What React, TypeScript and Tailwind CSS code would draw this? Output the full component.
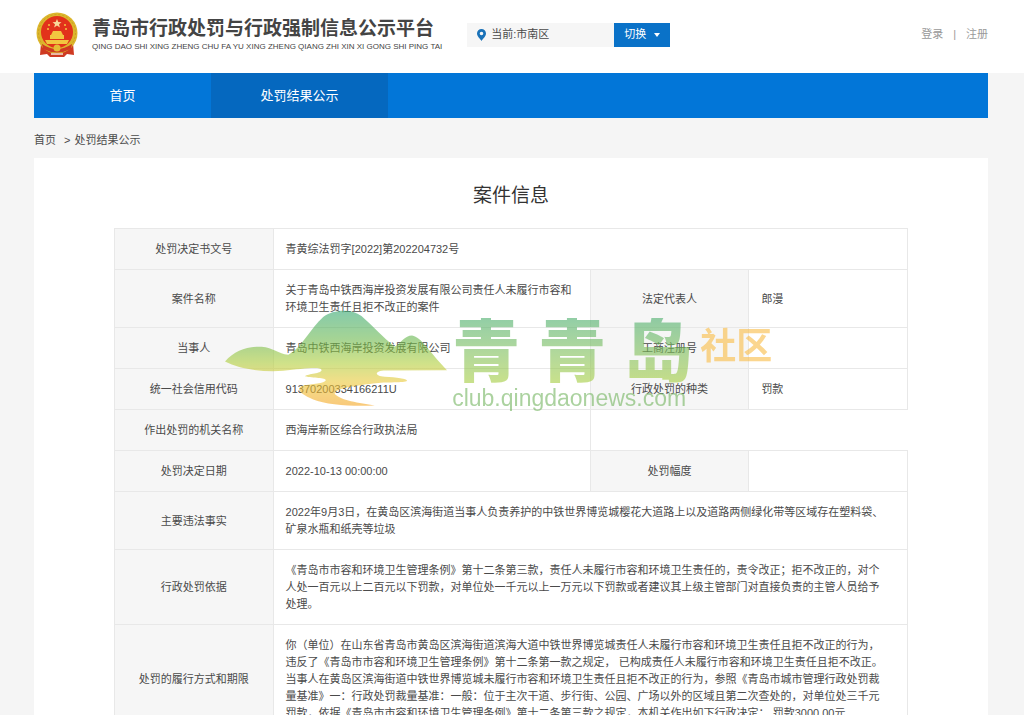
import React from 'react';

interface CaseField {
    label: string;
    lines: string[];
}

interface CaseRow {
    fields: CaseField[];
    // the row ends after its only value, the remaining columns stay empty
    short?: boolean;
}

const caseRows: CaseRow[] = [
    { fields: [{ label: '处罚决定书文号', lines: ['青黄综法罚字[2022]第202204732号'] }] },
    {
        fields: [
            { label: '案件名称', lines: ['关于青岛中铁西海岸投资发展有限公司责任人未履行市容和', '环境卫生责任且拒不改正的案件'] },
            { label: '法定代表人', lines: ['郎漫'] },
        ],
    },
    {
        fields: [
            { label: '当事人', lines: ['青岛中铁西海岸投资发展有限公司'] },
            { label: '工商注册号', lines: [''] },
        ],
    },
    {
        fields: [
            { label: '统一社会信用代码', lines: ['91370200334166211U'] },
            { label: '行政处罚的种类', lines: ['罚款'] },
        ],
    },
    { fields: [{ label: '作出处罚的机关名称', lines: ['西海岸新区综合行政执法局'] }], short: true },
    {
        fields: [
            { label: '处罚决定日期', lines: ['2022-10-13 00:00:00'] },
            { label: '处罚幅度', lines: [''] },
        ],
    },
    {
        fields: [
            {
                label: '主要违法事实',
                lines: [
                    '2022年9月3日，在黄岛区滨海街道当事人负责养护的中铁世界博览城樱花大道路上以及道路两侧绿化带等区域存在塑料袋、',
                    '矿泉水瓶和纸壳等垃圾',
                ],
            },
        ],
    },
    {
        fields: [
            {
                label: '行政处罚依据',
                lines: [
                    '《青岛市市容和环境卫生管理条例》第十二条第三款，责任人未履行市容和环境卫生责任的，责令改正；拒不改正的，对个',
                    '人处一百元以上二百元以下罚款，对单位处一千元以上一万元以下罚款或者建议其上级主管部门对直接负责的主管人员给予',
                    '处理。',
                ],
            },
        ],
    },
    {
        fields: [
            {
                label: '处罚的履行方式和期限',
                lines: [
                    '你（单位）在山东省青岛市黄岛区滨海街道滨海大道中铁世界博览城责任人未履行市容和环境卫生责任且拒不改正的行为，',
                    '违反了《青岛市市容和环境卫生管理条例》第十二条第一款之规定， 已构成责任人未履行市容和环境卫生责任且拒不改正。',
                    '当事人在黄岛区滨海街道中铁世界博览城未履行市容和环境卫生责任且拒不改正的行为，参照《青岛市城市管理行政处罚裁',
                    '量基准》一：行政处罚裁量基准：一般：位于主次干道、步行街、公园、广场以外的区域且第二次查处的，对单位处三千元',
                    '罚款，依据《青岛市市容和环境卫生管理条例》第十二条第三款之规定，本机关作出如下行政决定： 罚款3000.00元',
                ],
            },
        ],
    },
];

const Emblem: React.FC = () => (
    <svg width="42" height="46" viewBox="0 0 42 46" aria-hidden="true">
        <path d="M5 31 L4 43 L11 42 L14 45 L28 45 L31 42 L38 43 L37 31 Z" fill="#cf3a22" />
        <circle cx="21" cy="21" r="20.500" fill="#dcb62c" />
        <circle cx="21" cy="21" r="18.500" fill="none" stroke="#c79f25" strokeWidth="1" strokeDasharray="2 2" />
        <circle cx="21" cy="20" r="16" fill="#e2321b" />
        <path d="M21 7 l1.300 3 3.200 .2 -2.500 2 .9 3.200 -2.900 -1.800 -2.900 1.800 .9 -3.200 -2.500 -2 3.200 -.2z" fill="#f8d99a" />
        <g fill="#f2c640">
            <circle cx="13" cy="13" r="1" />
            <circle cx="29" cy="13" r="1" />
            <circle cx="12" cy="17" r="1" />
            <circle cx="30" cy="17" r="1" />
            <path d="M15 23 L17 19 H25 L27 23 Z" />
            <path d="M14 23 H28 V27 H14 Z" />
            <path d="M9 28 H33 L31 32 H11 Z" />
        </g>
        <path d="M6 32 Q21 42 36 32 L35 37 Q21 44 7 37 Z" fill="#cf3a22" />
        <circle cx="21" cy="36" r="3.500" fill="#e5bb35" />
        <path d="M15 41 H27 V43 H15 Z" fill="#e9b9a6" />
    </svg>
);

const PinIcon: React.FC = () => (
    <svg width="9" height="12" viewBox="0 0 9 12" aria-hidden="true">
        <path
            d="M4.500 0 A4.500 4.500 0 0 0 0 4.500 C0 7.500 3 9.500 4.500 12 C6 9.500 9 7.500 9 4.500 A4.500 4.500 0 0 0 4.500 0 Z M4.500 2.700 A1.800 1.800 0 1 1 4.500 6.300 A1.800 1.800 0 1 1 4.500 2.700 Z"
            fill="#1b72b8"
            fillRule="evenodd"
        />
    </svg>
);

const Watermark: React.FC = () => (
    <div className="pointer-events-none absolute top-[82px] left-[14%] flex items-start opacity-60">
        <svg width="222" height="97" viewBox="15 28 667 290" aria-hidden="true">
            <defs>
                <linearGradient id="hills" x1="0" y1="0" x2="0" y2="1">
                    <stop offset="0" stopColor="#35a873" />
                    <stop offset="0.300" stopColor="#6bb84e" />
                    <stop offset="0.550" stopColor="#b0cf3c" />
                    <stop offset="0.750" stopColor="#ecc93a" />
                    <stop offset="1" stopColor="#f6a623" />
                </linearGradient>
            </defs>
            <path
                d="M15 182 C45 150 80 136 125 138 C160 140 175 160 205 162 C245 140 270 85 310 48 C340 25 395 22 425 45 C460 75 490 110 525 138 C545 125 555 104 577 104 C605 108 630 155 682 208 L500 209 C465 208 460 225 495 228 C530 230 562 234 562 240 C555 247 500 243 460 248 C410 255 340 262 345 280 C360 298 420 308 465 314 C400 318 320 312 280 296 C240 280 225 262 250 254 C275 249 315 248 318 238 C318 230 280 232 255 226 C265 218 305 218 305 208 C303 196 250 204 190 210 C130 215 60 205 15 182 Z"
                fill="url(#hills)"
            />
        </svg>
        <div className="ml-[5px] pt-2">
            <div className="flex w-[240px] justify-between bg-linear-to-b from-[#4aae6c] to-[#a9cf3a] bg-clip-text text-[68px] leading-[68px] font-black text-transparent">
                <span>青</span>
                <span>青</span>
                <span>岛</span>
            </div>
            <div className="text-[23px] leading-6 text-[#74b560]">club.qingdaonews.com</div>
        </div>
        <div className="ml-2 pt-4 text-[36px] leading-[42px] font-bold text-[#fabc45]">社区</div>
    </div>
);

const ValueLines: React.FC<{ lines: string[] }> = ({ lines }) => (
    <>
        {lines.map((line, index) => (
            <div key={index} className="whitespace-nowrap">{line}</div>
        ))}
    </>
);

const App: React.FC = () => {
    const getSpan = (row: CaseRow) => (row.fields.length === 1 && !row.short ? 3 : 1);

    return (
        <div className="min-h-screen bg-[#f5f5f5] font-['Liberation_Sans','Noto_Sans_CJK_SC',sans-serif] text-[11px] leading-[17px] text-[#4a4a4a]">
            <header className="flex h-[73px] items-center bg-white pr-9 pb-1 pl-9">
                <Emblem />
                <div className="ml-[14px]">
                    <h1 className="text-[19px] leading-6 font-bold whitespace-nowrap text-[#444]">
                        青岛市行政处罚与行政强制信息公示平台
                    </h1>
                    <p className="text-[8px] leading-3 whitespace-nowrap text-[#444]">
                        QING DAO SHI XING ZHENG CHU FA YU XING ZHENG QIANG ZHI XIN XI GONG SHI PING TAI
                    </p>
                </div>
                <div className="ml-[25px] flex h-6 items-center">
                    <div className="flex h-6 w-[147px] items-center gap-[5px] bg-[#f6f6f6] pl-[10px]">
                        <PinIcon />
                        <span>当前:市南区</span>
                    </div>
                    <button className="flex h-6 w-14 items-center justify-center gap-2 bg-[#0a72c8] text-white">
                        切换
                        <svg width="6" height="4" viewBox="0 0 6 4" aria-hidden="true">
                            <path d="M0 0 H6 L3 4 Z" fill="white" />
                        </svg>
                    </button>
                </div>
                <div className="ml-auto flex gap-[10px] text-[#999]">
                    <a href="#login">登录</a>
                    <span>|</span>
                    <a href="#register">注册</a>
                </div>
            </header>

            <div className="pr-9 pl-[34px]">
                <nav className="flex h-[45px] bg-[#0276d8] text-[13px] leading-[46px] text-white">
                    <a href="#home" className="w-[177px] text-center">首页</a>
                    <a href="#results" className="w-[177px] bg-[#0568bf] text-center">处罚结果公示</a>
                </nav>

                <div className="flex h-10 items-center gap-1 pt-1">
                    <a href="#home" className="mr-1">首页</a>
                    <span>&gt;</span>
                    <a href="#results">处罚结果公示</a>
                </div>

                <main className="bg-white px-20 pb-10">
                    <h2 className="pt-6 pb-[18px] text-center text-[19px] leading-7 text-[#333]">案件信息</h2>
                    <div className="relative">
                        <table className="w-full table-fixed border-collapse border-t border-l border-[#e8e8e8]">
                            <colgroup>
                                <col className="w-[20%]" />
                                <col className="w-[40%]" />
                                <col className="w-[20%]" />
                                <col className="w-[20%]" />
                            </colgroup>
                            <tbody>
                                {caseRows.map((row) => (
                                    <tr key={row.fields[0].label} className="h-[41px]">
                                        {row.fields.map((field) => (
                                            <React.Fragment key={field.label}>
                                                <th
                                                    scope="row"
                                                    className="border border-[#e8e8e8] bg-[#f6f6f6] pt-3 pb-[11px] text-center font-normal"
                                                >
                                                    {field.label}
                                                </th>
                                                <td
                                                    colSpan={getSpan(row)}
                                                    className="border border-[#e8e8e8] pt-3 pb-[11px] pl-3"
                                                >
                                                    <ValueLines lines={field.lines} />
                                                </td>
                                            </React.Fragment>
                                        ))}
                                    </tr>
                                ))}
                            </tbody>
                        </table>
                        <Watermark />
                    </div>
                </main>
            </div>
        </div>
    );
};

export default App;
